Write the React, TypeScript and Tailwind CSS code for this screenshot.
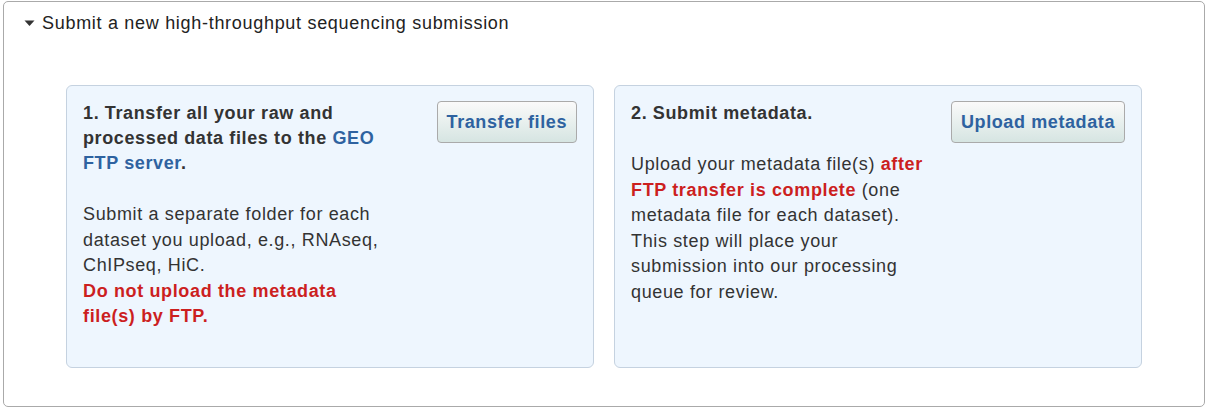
import React from 'react';

const Card: React.FC<{ title: React.ReactNode; button: string; children: React.ReactNode }> = ({ title, button, children }) => (
  <div className="flex-1 h-[283px] bg-[#eef6fe] border border-[#c5d2e0] rounded-[6px] px-4 pt-[15px] flex justify-between items-start">
    <div className="w-[300px]">
      <h3 className="text-[18px] leading-[25px] font-bold text-[#333] tracking-[0.62px]">{title}</h3>
      <p className="mt-[26px] text-[18px] leading-[25.5px] text-[#333] tracking-[0.64px]">{children}</p>
    </div>
    <button className="h-[42px] px-[9px] border border-[#aaa] rounded-[4px] bg-gradient-to-b from-[#fafafa] to-[#d6e5e2] text-[18px] font-bold text-[#2e62a0] tracking-[0.6px]">
      {button}
    </button>
  </div>
);

export default function App() {
  return (
    <div className="w-[1208px] h-[410px] bg-white pt-[1px] pl-[3px] pr-[3px] font-['Liberation_Sans',Arial,sans-serif]">
      <div className="h-[406px] border border-[#aaa] rounded-[5px]">
        <div className="flex items-center pl-[20px] pt-[10px] text-[18px] leading-[22px] text-[#222] tracking-[0.7px]">
          <svg width="11" height="7" viewBox="0 0 11 7" className="mr-[7px]">
            <path d="M0.5 0.5 L10.5 0.5 L5.5 6 Z" fill="#333" />
          </svg>
          <span>Submit a new high-throughput sequencing submission</span>
        </div>
        <div className="flex gap-[20px] pl-[62px] pr-[62px] mt-[51px]">
          <Card
            title={<>1. Transfer all your raw and processed data files to the <span className="text-[#2e62a0]">GEO FTP server</span>.</>}
            button="Transfer files"
          >
            Submit a separate folder for each dataset you upload, e.g., RNAseq, ChIPseq, HiC.
            <br />
            <span className="font-bold text-[#cc1f1f]">Do not upload the metadata file(s) by FTP.</span>
          </Card>
          <Card title="2. Submit metadata." button="Upload metadata">
            Upload your metadata file(s) <span className="font-bold text-[#cc1f1f]">after FTP transfer is complete</span> (one metadata file for each dataset). This step will place your submission into our processing queue for review.
          </Card>
        </div>
      </div>
    </div>
  );
}
